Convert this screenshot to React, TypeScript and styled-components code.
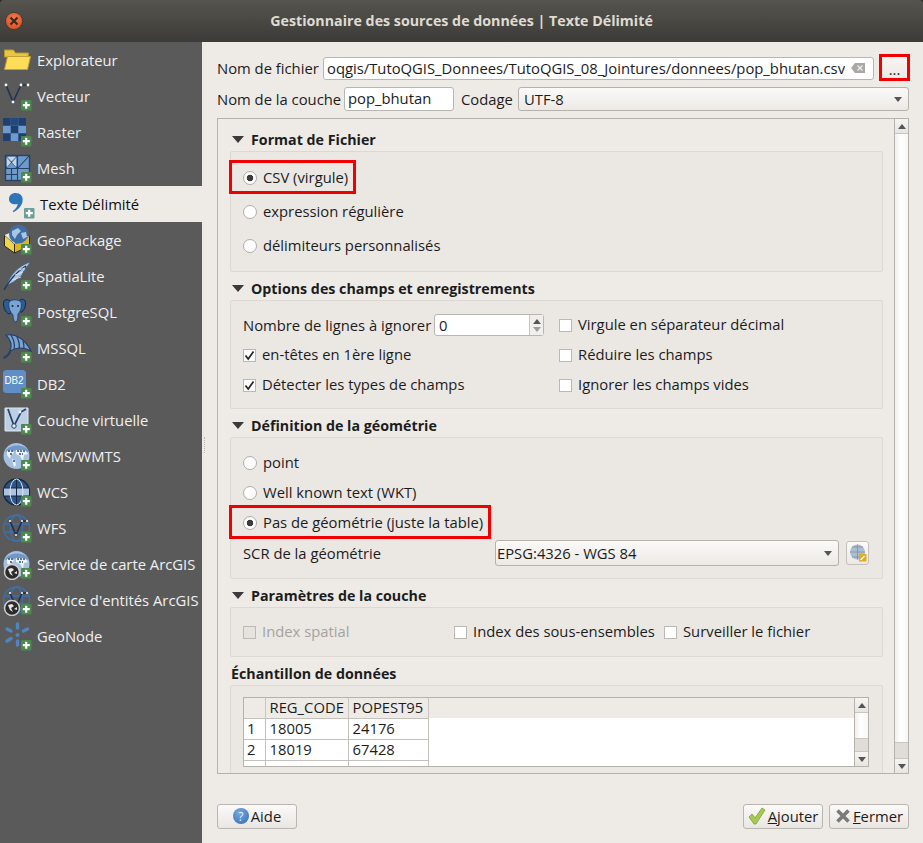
import styled, { createGlobalStyle } from 'styled-components';
import type { ReactNode } from 'react';

const GlobalStyle = createGlobalStyle`
    html, body {
        margin: 0;
        padding: 0;
        background-color: #2c2b28;
    }
    * {
        box-sizing: border-box;
    }
`;

const BLUE = '#5f8fc4';

const Plus = ({ light }: { light?: boolean }) => (
    <g>
        <rect x="19" y="20" width="10.5" height="10.5" rx="1" fill={light ? '#6b9f97' : '#4b8a4c'} />
        <path d="M24.2 21.8v7M20.8 25.2h7" stroke="#fff" strokeWidth="2.2" />
    </g>
);

const GlobeLight = () => (
    <g>
        <circle cx="14.5" cy="16" r="13" fill="#a5c0e0" />
        <path d="M3 12c3-8 20-9 24 0-8-2-16-2-24 0z" fill="#6f98c9" />
        <path d="M5 11l5-1 2 3-3 2-1 4-3-4zM14 10l9 0 3 4-4 1-1 6-3-5-4-2zM10 19l3 1 1 5-2 2z" fill="#eef3f8" />
        <path d="M6 11h6M15 11h8M8 14h3M17 14h4M11 21h2" stroke="#2d4f7c" strokeWidth="1.500" strokeDasharray="2 1" />
    </g>
);

const GlobeLines = () => (
    <g fill="none" stroke="#3f70ad" strokeWidth="1.3">
        <circle cx="14.5" cy="16" r="13" />
        <ellipse cx="14.5" cy="16" rx="6" ry="13" />
        <path d="M2 12h25M2 20h25" />
        <path d="M8 9l6 14 6-14h5" stroke="#1e2e46" strokeWidth="1.5" />
        <circle cx="8" cy="9" r="1" fill="#fff" stroke="none" />
        <circle cx="14" cy="23" r="1" fill="#fff" stroke="none" />
        <circle cx="20" cy="9" r="1" fill="#fff" stroke="none" />
        <circle cx="25" cy="9" r="1" fill="#fff" stroke="none" />
    </g>
);

const SmallEarth = () => (
    <g>
        <circle cx="10" cy="24" r="7.500" fill="#2b2b2b" stroke="#cfcfcf" strokeWidth="1.500" />
        <path d="M6 21l4-1 2 2-3 2 2 4-3-2zM12 25l3-2 0 3z" fill="#e8e8e8" />
    </g>
);

const icons: Record<string, ReactNode> = {
    folder: (
        <g>
            <path d="M2.5 6h9l2 3h13l-.5 4H2.5z" fill="#e9c543" stroke="#b8992f" />
            <path d="M5.5 12.5h23l-3 13H2.500z" fill="#fbdd58" stroke="#c1a136" />
        </g>
    ),
    vector: (
        <g>
            <path d="M4 5l7 17 8-17h7" fill="none" stroke="#22344f" strokeWidth="1.6" />
            {[[4, 5], [11, 22], [19, 5], [26, 5]].map(([x, y]) => (
                <circle key={x} cx={x} cy={y} r="1.4" fill="#f4f4f4" />
            ))}
        </g>
    ),
    raster: (
        <g>
            <rect x="1" y="2" width="23" height="23" fill="#6e9bcc" />
            <path d="M1 2h7.700v7.700H1zM16.300 2H24v7.700h-7.700zM8.700 9.700h7.600v7.600H8.700zM1 17.300h7.700V25H1zM16.300 17.300H24V25h-7.700z" fill="#1f3f6e" />
            <path d="M8.700 2h7.600v7.700H8.700z" fill="#244a7c" />
        </g>
    ),
    mesh: (
        <g>
            <rect x="3.500" y="3.500" width="24" height="25" fill="#6e9ac9" stroke="#24426b" strokeWidth="1.400" />
            <path d="M3.500 16.500h24M15.500 3.500v25M3.500 3.500l12 13M15.500 3.500l-12 13M15.500 16.500l12-13M3.500 22.500h12M9.500 16.500v12" fill="none" stroke="#24426b" strokeWidth="1.100" />
            <path d="M5 5h9L9.500 9.500zM5 15V6l4 4.500zM14 15V6l-4 4.500z" fill="#c9d4df" />
        </g>
    ),
    delimited: (
        <path d="M10.500 5c4.800 0 8 3.300 7 8.500-.8 4.500-4.600 8.500-9 10.800l-.8-1.100c3-2.200 4.800-4.600 5-7.500-2.800 1.500-8.700.3-8.700-4.500C4 7.200 7 5 10.500 5z" fill="#2c75b8" />
    ),
    geopackage: (
        <g>
            <path d="M2.500 11l10 9v9l-10-7z" fill="#f0d44a" stroke="#2e2a14" />
            <path d="M12.500 20l15-8v10l-15 7z" fill="#d8b62a" stroke="#2e2a14" />
            <path d="M2.500 11l5-2 13 3 7 0-15 8z" fill="#ece8da" />
            <circle cx="16.500" cy="10" r="9.500" fill="#3f6ea6" />
            <path d="M10 7l6-3 3 3-4 4-2 4-3-4zM19 9l5-1 1 5-4 2z" fill="#a9c5e3" />
        </g>
    ),
    spatialite: (
        <g>
            <path d="M5 25C8 15 16 6 28 2c-1 3-3 5-5 6 1 1 0 3-2 4 0 3-3 5-5 6-2 3-6 5-11 7z" fill="#a9c4e2" stroke="#3a5f8d" strokeWidth=".8" />
            <path d="M2 30C7 21 14 12 24 6" fill="none" stroke="#1d3557" strokeWidth="1.300" />
            <path d="M10 20l9-3M13 15l8-3M17 10l6-2" stroke="#eaf1f8" strokeWidth=".8" />
        </g>
    ),
    postgres: (
        <g>
            <path d="M8 5C4 2 1 4 1.500 9c.4 4 3 9 6.500 9 1-2 1-4 0-6z" fill="#2d5d96" stroke="#16263f" />
            <path d="M17 5c3-3 7-2 6.500 3-.3 4-2.500 9-5.500 8-1-2-1-4 0-6z" fill="#2d5d96" stroke="#16263f" />
            <path d="M7 6c3-3 9-3 12 0 1 4 0 9-3 12 0 3 0 7-2 8-2 0-3-3-3-7-3-3-5-8-4-13z" fill="#7aa5d2" stroke="#25456f" />
            <circle cx="10.500" cy="10" r="1" fill="#16263f" />
            <circle cx="16" cy="10" r="1" fill="#16263f" />
        </g>
    ),
    mssql: (
        <g>
            <path d="M4 3c9-2 19 4 25 16-7-4-14-4-21 0C10 14 9 8 4 3z" fill="#7aa2cf" stroke="#23406b" strokeWidth="1.200" />
            <path d="M9 3c3 5 4 10 3 14M15 5c2 4 3 8 2 12M21 9c1 3 1 5 1 8" fill="none" stroke="#23406b" strokeWidth="1.300" />
            <path d="M1.500 26C6 24 8 21 8.500 18" fill="none" stroke="#23406b" strokeWidth="2" />
        </g>
    ),
    db2: (
        <g>
            <rect x="1" y="2" width="23" height="23" rx="3.500" fill={BLUE} />
            <text x="2.500" y="15.500" fontFamily="'Liberation Sans', sans-serif" fontSize="11" fill="#fff" textLength="19" lengthAdjust="spacingAndGlyphs">DB2</text>
        </g>
    ),
    virtual: (
        <g>
            <path d="M3 4h23v20l-4 3H3z" fill="#bccfe4" stroke="#dfe7f0" />
            <path d="M6 5l6 17 7-14 5-3" fill="none" stroke="#24426b" strokeWidth="1.700" />
            <circle cx="12" cy="22" r="2.200" fill="#e6edf5" stroke="#24426b" />
            <circle cx="18" cy="8" r="1.400" fill="#fff" />
        </g>
    ),
    wms: <GlobeLight />,
    wcs: (
        <g>
            <circle cx="14.5" cy="16" r="13" fill="#2c5588" stroke="#16263f" strokeWidth="1.400" />
            <path d="M2 12h25v8H2z" fill="#a9c3e0" />
            <path d="M2 12h25M2 20h25M14.500 3v26" stroke="#16263f" />
            <ellipse cx="14.5" cy="16" rx="6.500" ry="13" fill="none" stroke="#dce6f1" />
        </g>
    ),
    wfs: <GlobeLines />,
    arcMap: (
        <g>
            <GlobeLight />
            <SmallEarth />
        </g>
    ),
    arcFeature: (
        <g>
            <GlobeLines />
            <SmallEarth />
        </g>
    ),
    geonode: (
        <g stroke="#4f85c0" strokeWidth="3.400" strokeLinecap="round" fill="none">
            <path d="M15.500 4v4M5 9l4 2M25.500 9l-4 2M5 21l4-2.500M15.500 21v4" />
            <circle cx="15.500" cy="15" r="1" fill="#4f85c0" strokeWidth="2" />
        </g>
    ),
};

const sources = [
    { key: 'folder', label: 'Explorateur', plus: false },
    { key: 'vector', label: 'Vecteur', plus: true },
    { key: 'raster', label: 'Raster', plus: true },
    { key: 'mesh', label: 'Mesh', plus: true },
    { key: 'delimited', label: 'Texte Délimité', plus: true },
    { key: 'geopackage', label: 'GeoPackage', plus: true },
    { key: 'spatialite', label: 'SpatiaLite', plus: true },
    { key: 'postgres', label: 'PostgreSQL', plus: true },
    { key: 'mssql', label: 'MSSQL', plus: true },
    { key: 'db2', label: 'DB2', plus: true },
    { key: 'virtual', label: 'Couche virtuelle', plus: true },
    { key: 'wms', label: 'WMS/WMTS', plus: true },
    { key: 'wcs', label: 'WCS', plus: true },
    { key: 'wfs', label: 'WFS', plus: true },
    { key: 'arcMap', label: 'Service de carte ArcGIS', plus: true },
    { key: 'arcFeature', label: "Service d'entités ArcGIS", plus: true },
    { key: 'geonode', label: 'GeoNode', plus: true },
];

const ScrollBar = ({ thumb }: { thumb: number }) => (
    <ScrollTrack>
        <ScrollButton>
            <ArrowUp />
        </ScrollButton>
        <ScrollRail />
        <ScrollThumb $height={thumb} />
        <ScrollButton>
            <ArrowDown />
        </ScrollButton>
    </ScrollTrack>
);

const Radio = ({ label, checked, marked }: { label: string; checked?: boolean; marked?: boolean }) => (
    <RadioRow>
        <RadioLabel $marked={marked}>
            <RadioDot $checked={checked} />
            <LiftedText>{label}</LiftedText>
        </RadioLabel>
    </RadioRow>
);

const Check = ({ label, checked, disabled }: { label: string; checked?: boolean; disabled?: boolean }) => (
    <CheckRow $disabled={disabled}>
        <CheckBox $disabled={disabled}>
            {checked && (
                <svg width="11" height="11" viewBox="0 0 11 11">
                    <path d="M1.500 5.500l2.700 3.500L9.500 1.500" fill="none" stroke="#2a2a2a" strokeWidth="1.800" />
                </svg>
            )}
        </CheckBox>
        <LiftedText>{label}</LiftedText>
    </CheckRow>
);

const App = () => {
    return (
        <Window>
            <GlobalStyle />
            <TitleBar>
                <CloseButton>
                    <svg width="10" height="10" viewBox="0 0 10 10">
                        <path d="M1.500 1.500l7 7M8.500 1.500l-7 7" stroke="#3a2a20" strokeWidth="2.200" />
                    </svg>
                </CloseButton>
                Gestionnaire des sources de données | Texte Délimité
            </TitleBar>
            <Body>
                <Sidebar>
                    {sources.map((s) => (
                        <SideItem key={s.key} $active={s.key === 'delimited'}>
                            <svg width="32" height="32" viewBox="0 0 32 32">
                                {icons[s.key]}
                                {s.plus && <Plus light={s.key === 'delimited'} />}
                            </svg>
                            {s.label}
                        </SideItem>
                    ))}
                </Sidebar>
                <Main>
                    <FormRow>
                        <FieldLabel>Nom de fichier</FieldLabel>
                        <PathInput>
                            <PathText>oqgis/TutoQGIS_Donnees/TutoQGIS_08_Jointures/donnees/pop_bhutan.csv</PathText>
                            <svg width="14" height="10" viewBox="0 0 14 10">
                                <path d="M4 0h10v10H4L0 5z" fill="#aaa8a4" />
                                <path d="M6.500 2.500l5 5M11.500 2.500l-5 5" stroke="#eeeeee" strokeWidth="1.300" />
                            </svg>
                        </PathInput>
                        <BrowseButton>...</BrowseButton>
                    </FormRow>
                    <LayerRow>
                        <LayerLabel>Nom de la couche</LayerLabel>
                        <LayerInput>pop_bhutan</LayerInput>
                        <CodecLabel>Codage</CodecLabel>
                        <Combo $width={391}>
                            UTF-8
                            <ComboArrow />
                        </Combo>
                    </LayerRow>
                    <ScrollFrame>
                        <ScrollContent>
                            <SectionTitle>
                                <Caret />
                                Format de Fichier
                            </SectionTitle>
                            <Group $height={121} $top={9}>
                                <Radio label="CSV (virgule)" checked marked />
                                <Radio label="expression régulière" />
                                <Radio label="délimiteurs personnalisés" />
                            </Group>

                            <SectionTitle>
                                <Caret />
                                Options des champs et enregistrements
                            </SectionTitle>
                            <Group $height={109} $top={9}>
                                <OptionsGrid>
                                    <SpinRow>
                                        Nombre de lignes à ignorer
                                        <SpinBox>
                                            0
                                            <SpinArrows>
                                                <ArrowUp />
                                                <SpinDown />
                                            </SpinArrows>
                                        </SpinBox>
                                    </SpinRow>
                                    <Check label="Virgule en séparateur décimal" />
                                    <Check label="en-têtes en 1ère ligne" checked />
                                    <Check label="Réduire les champs" />
                                    <Check label="Détecter les types de champs" checked />
                                    <Check label="Ignorer les champs vides" />
                                </OptionsGrid>
                            </Group>

                            <SectionTitle>
                                <Caret />
                                Définition de la géométrie
                            </SectionTitle>
                            <Group $height={142} $top={10}>
                                <GeomRadios>
                                    <Radio label="point" />
                                    <Radio label="Well known text (WKT)" />
                                    <Radio label="Pas de géométrie (juste la table)" checked marked />
                                </GeomRadios>
                                <CrsRow>
                                    <CrsLabel>SCR de la géométrie</CrsLabel>
                                    <Combo $width={344}>
                                        EPSG:4326 - WGS 84
                                        <ComboArrow />
                                    </Combo>
                                    <CrsButton>
                                        <svg width="20" height="20" viewBox="0 0 20 20">
                                            <circle cx="9.500" cy="9" r="7.500" fill="#a8bfd8" />
                                            <path d="M2 9h15M9.500 1.500v15M4 4h11M4 14h11" stroke="#8d8d8d" strokeWidth=".8" />
                                            <rect x="11" y="11" width="7.500" height="7.500" fill="#e0ac1a" />
                                            <path d="M12.500 17l4-4" stroke="#fff" strokeWidth="1.200" />
                                        </svg>
                                    </CrsButton>
                                </CrsRow>
                            </Group>

                            <SectionTitle>
                                <Caret />
                                Paramètres de la couche
                            </SectionTitle>
                            <Group $height={50} $top={14}>
                                <LayerOptions>
                                    <Check label="Index spatial" disabled />
                                    <Check label="Index des sous-ensembles" />
                                    <Check label="Surveiller le fichier" />
                                </LayerOptions>
                            </Group>

                            <SectionTitle>Échantillon de données</SectionTitle>
                            <Group $height={120} $top={11}>
                                <SampleView>
                                    <SampleClip>
                                        <SampleTable>
                                            <thead>
                                                <tr>
                                                    <HeadCell $width={21} />
                                                    <HeadCell $width={83}>REG_CODE</HeadCell>
                                                    <HeadCell $width={80}>POPEST95</HeadCell>
                                                    <HeadFiller />
                                                </tr>
                                            </thead>
                                            <tbody>
                                                <tr>
                                                    <RowCell>1</RowCell>
                                                    <DataCell>18005</DataCell>
                                                    <DataCell>24176</DataCell>
                                                    <FillerCell />
                                                </tr>
                                                <tr>
                                                    <RowCell>2</RowCell>
                                                    <DataCell>18019</DataCell>
                                                    <DataCell>67428</DataCell>
                                                    <FillerCell />
                                                </tr>
                                                <tr>
                                                    <RowCell />
                                                    <DataCell />
                                                    <DataCell />
                                                    <FillerCell />
                                                </tr>
                                            </tbody>
                                        </SampleTable>
                                    </SampleClip>
                                    <ScrollBar thumb={14} />
                                </SampleView>
                            </Group>
                        </ScrollContent>
                        <ScrollBar thumb={17} />
                    </ScrollFrame>
                    <Footer>
                        <PushButton>
                            <HelpBadge>?</HelpBadge>
                            Aide
                        </PushButton>
                        <FooterRight>
                            <PushButton>
                                <svg width="18" height="18" viewBox="0 0 18 18">
                                    <path d="M1 10l3-3 3 4L14 1l3 2-9 14H6z" fill="#a5cb4f" stroke="#7d9e3a" strokeWidth=".8" />
                                </svg>
                                <span>
                                    <u>A</u>jouter
                                </span>
                            </PushButton>
                            <PushButton>
                                <svg width="16" height="16" viewBox="0 0 16 16">
                                    <path d="M2.500 2.500l11 11M13.500 2.500l-11 11" stroke="#7a7a78" strokeWidth="3.600" />
                                </svg>
                                <span>
                                    <u>F</u>ermer
                                </span>
                            </PushButton>
                        </FooterRight>
                    </Footer>
                </Main>
            </Body>
        </Window>
    );
};

export default App;

const Window = styled.div`
    width: 923px;
    height: 843px;
    display: flex;
    flex-direction: column;
    overflow: hidden;
    font-family: 'Open Sans', 'Noto Sans', sans-serif;
    font-size: 14.8px;
    color: #1c1c1c;
`;

const TitleBar = styled.div`
    position: relative;
    height: 42px;
    flex: none;
    display: flex;
    align-items: center;
    justify-content: center;
    padding: 0 0 2px 0;
    background: linear-gradient(#56544e, #3c3b37);
    border-radius: 4px 4px 0 0;
    color: #dfdbd2;
    font-size: 14.25px;
    font-weight: 700;
`;

const CloseButton = styled.div`
    position: absolute;
    left: 6px;
    top: 13px;
    width: 16px;
    height: 16px;
    border-radius: 50%;
    display: flex;
    align-items: center;
    justify-content: center;
    background: radial-gradient(circle at 50% 35%, #f47a4a, #d9481c);
    box-shadow: 0 0 0 1px #4a3a30;
`;

const Body = styled.div`
    flex: 1;
    display: flex;
    min-height: 0;
    background-color: #eeebe7;
`;

const Sidebar = styled.div`
    width: 202px;
    flex: none;
    background-color: #5a5a5a;
`;

const SideItem = styled.div<{ $active?: boolean }>`
    height: 36px;
    display: flex;
    align-items: center;
    gap: 3px;
    padding-left: ${(p) => (p.$active ? '5px' : '2px')};
    white-space: nowrap;
    background-color: ${(p) => (p.$active ? '#eeebe7' : 'transparent')};
    color: ${(p) => (p.$active ? '#101010' : '#f0f0f0')};
`;

const Main = styled.div`
    position: relative;
    flex: 1;
    min-width: 0;
    display: flex;
    flex-direction: column;
    padding: 15px 14px 0 15px;

    &::before {
        content: '';
        position: absolute;
        left: 2px;
        top: 395px;
        height: 16px;
        border-left: 1px dotted #b8b5b0;
    }
`;

const FormRow = styled.div`
    display: flex;
    align-items: center;
    height: 23px;
`;

const LayerRow = styled(FormRow)`
    height: 24px;
    margin-top: 7px;
`;

const FieldLabel = styled.div`
    white-space: nowrap;
    padding-bottom: 1px;
`;

const LayerLabel = styled(FieldLabel)`
    width: 127px;
    flex: none;
`;

const inputBox = `
    height: 100%;
    display: flex;
    align-items: center;
    background-color: #fff;
    border: 1px solid #b9b6b1;
    border-radius: 3px;
    padding: 0 3px 2px;
    white-space: nowrap;
    overflow: hidden;
`;

const PathInput = styled.div`
    ${inputBox}
    width: 551px;
    margin-left: auto;
    justify-content: space-between;
    padding-right: 8px;
`;

const PathText = styled.span`
    overflow: hidden;
`;

const BrowseButton = styled.div`
    position: relative;
    width: 29px;
    height: 100%;
    margin-left: 6px;
    display: flex;
    align-items: center;
    justify-content: center;
    background: linear-gradient(#f7f5f3, #ebe8e4);

    &::after {
        content: '';
        position: absolute;
        inset: -3px -1px -1px -1px;
        border: 3px solid #f00000;
    }
`;

const LayerInput = styled.div`
    ${inputBox}
    width: 110px;
    flex: none;
`;

const CodecLabel = styled.div`
    margin: 0 auto 0 7px;
    padding-bottom: 1px;
`;

const Combo = styled.div<{ $width: number }>`
    position: relative;
    flex: none;
    width: ${(p) => p.$width}px;
    height: 100%;
    display: flex;
    align-items: center;
    padding: 0 0 1px 5px;
    border: 1px solid #b5b2ad;
    border-radius: 3px;
    background: linear-gradient(#fbfaf9, #ece9e5);
`;

const ComboArrow = styled.span`
    position: absolute;
    right: 6px;
    top: 50%;
    margin-top: -2px;
    border-left: 4px solid transparent;
    border-right: 4px solid transparent;
    border-top: 5px solid #555;
`;

const ScrollFrame = styled.div`
    height: 656px;
    margin-top: 7px;
    display: flex;
    border: 1px solid #b5b2ad;
    overflow: hidden;
`;

const ScrollContent = styled.div`
    flex: 1;
    min-width: 0;
    padding: 10px 11px 0 12px;
    overflow: hidden;
`;

const ScrollTrack = styled.div`
    width: 14px;
    flex: none;
    display: flex;
    flex-direction: column;
    border-left: 1px solid #b5b2ad;
`;

const ScrollButton = styled.div`
    height: 14px;
    flex: none;
    display: flex;
    align-items: center;
    justify-content: center;
    background: linear-gradient(#f6f4f2, #e8e5e1);
`;

const ScrollRail = styled.div`
    flex: 1;
    border-top: 1px solid #c9c6c1;
    background: linear-gradient(90deg, #f2f0ee, #ffffff 45%, #f8f7f5);
`;

const ScrollThumb = styled.div<{ $height: number }>`
    height: ${(p) => p.$height}px;
    flex: none;
    background-color: #e0ddd9;
    border-top: 1px solid #c9c6c1;
    border-bottom: 1px solid #c9c6c1;
`;

const ArrowUp = styled.span`
    border-left: 4px solid transparent;
    border-right: 4px solid transparent;
    border-bottom: 5px solid #555;
`;

const ArrowDown = styled.span`
    border-left: 4px solid transparent;
    border-right: 4px solid transparent;
    border-top: 5px solid #555;
`;

const SpinDown = styled(ArrowDown)`
    border-top-color: #a09d99;
`;

const SectionTitle = styled.div`
    height: 22px;
    display: flex;
    align-items: center;
    gap: 7px;
    padding: 0 0 2px 1px;
    font-size: 14.25px;
    font-weight: 700;

    &:not(:first-child) {
        margin-top: 6px;
    }
`;

const Caret = styled.span`
    margin-left: 1px;
    border-left: 6px solid transparent;
    border-right: 6px solid transparent;
    border-top: 7px solid #3a3a3a;
`;

const Group = styled.div<{ $height: number; $top: number }>`
    height: ${(p) => p.$height}px;
    padding: ${(p) => p.$top}px 13px 0 12px;
    background-color: #ebe8e4;
    border: 1px solid #dcd9d4;
    border-radius: 2px;
`;

const LiftedText = styled.span`
    margin-top: -2px;
`;

const RadioRow = styled.div`
    height: 34px;
    display: flex;
    align-items: center;
`;

const GeomRadios = styled.div`
    display: flex;
    flex-direction: column;

    ${RadioRow} {
        height: 30px;
    }
`;

const RadioLabel = styled.div<{ $marked?: boolean }>`
    position: relative;
    display: flex;
    align-items: center;
    gap: 6px;
    white-space: nowrap;

    ${(p) =>
        p.$marked &&
        `&::after {
            content: '';
            position: absolute;
            left: -14px;
            right: -8px;
            top: -9px;
            bottom: -7px;
            border: 3px solid #f00000;
        }`}
`;

const RadioDot = styled.span<{ $checked?: boolean }>`
    width: 14px;
    height: 14px;
    flex: none;
    border-radius: 50%;
    border: 1px solid #b0ada8;
    background: ${(p) => (p.$checked ? 'radial-gradient(circle, #3c3c3c 0 3px, #fff 3.6px)' : '#fff')};
`;

const CheckRow = styled.div<{ $disabled?: boolean }>`
    display: flex;
    align-items: center;
    gap: 6px;
    white-space: nowrap;
    color: ${(p) => (p.$disabled ? '#a5a29e' : 'inherit')};
`;

const CheckBox = styled.span<{ $disabled?: boolean }>`
    width: 13px;
    height: 13px;
    flex: none;
    display: flex;
    align-items: center;
    justify-content: center;
    border: 1px solid #bcb9b4;
    background-color: ${(p) => (p.$disabled ? '#e6e3df' : '#fff')};
`;

const OptionsGrid = styled.div`
    display: grid;
    grid-template-columns: 316px 1fr;
    grid-auto-rows: 30px;
    align-items: center;
`;

const SpinRow = styled.div`
    display: flex;
    align-items: center;
    justify-content: space-between;
    width: 301px;
    white-space: nowrap;
`;

const SpinBox = styled.div`
    position: relative;
    width: 110px;
    height: 22px;
    display: flex;
    align-items: center;
    padding: 0 0 1px 4px;
    background-color: #fff;
    border: 1px solid #b9b6b1;
    border-radius: 3px;
`;

const SpinArrows = styled.div`
    position: absolute;
    right: 0;
    top: 0;
    bottom: 0;
    width: 14px;
    display: flex;
    flex-direction: column;
    align-items: center;
    justify-content: center;
    gap: 3px;
    border-left: 1px solid #c9c6c1;
    background-color: #f1efec;
`;

const CrsRow = styled.div`
    height: 26px;
    margin-top: 2px;
    display: flex;
    align-items: center;
    gap: 6px;

    ${Combo} {
        padding-left: 1px;
    }
`;

const CrsLabel = styled.div`
    width: 246px;
    flex: none;
    white-space: nowrap;
`;

const CrsButton = styled.div`
    width: 24px;
    height: 24px;
    margin-left: 1px;
    display: flex;
    align-items: center;
    justify-content: center;
    border: 1px solid #c4c1bc;
    border-radius: 3px;
    background: linear-gradient(#fbfaf9, #ece9e5);
`;

const LayerOptions = styled.div`
    display: grid;
    grid-template-columns: 211px 210px 1fr;
    height: 20px;
    align-items: center;
`;

const SampleView = styled.div`
    height: 70px;
    display: flex;
    border: 1px solid #b5b2ad;
    background-color: #fff;
`;

const SampleClip = styled.div`
    flex: 1;
    min-width: 0;
    overflow: hidden;
`;

const SampleTable = styled.table`
    width: 100%;
    table-layout: fixed;
    border-collapse: collapse;
    line-height: 18px;
`;

const HeadCell = styled.th<{ $width: number }>`
    width: ${(p) => p.$width}px;
    height: 20px;
    padding: 0 0 1px 4px;
    font-weight: 400;
    text-align: left;
    white-space: nowrap;
    background-color: #eeebe7;
    border-right: 1px solid #c9c6c1;
`;

const HeadFiller = styled.th`
    background-color: #eeebe7;
`;

const RowCell = styled.td`
    height: 21px;
    padding: 0 0 1px 3px;
    border: 1px solid #c4c1bc;
    border-left: none;
    background-color: #fff;
`;

const DataCell = styled.td`
    height: 21px;
    padding: 0 0 1px 4px;
    border: 1px solid #c4c1bc;
`;

const FillerCell = styled.td`
    background-color: #fff;
`;

const Footer = styled.div`
    margin-top: 30px;
    display: flex;
    justify-content: space-between;
`;

const FooterRight = styled.div`
    display: flex;
    gap: 6px;
`;

const PushButton = styled.div`
    width: 80px;
    height: 25px;
    display: flex;
    align-items: center;
    justify-content: center;
    gap: 2px;
    padding-bottom: 1px;
    border: 1px solid #b9b6b1;
    border-radius: 3px;
    background: linear-gradient(#fbfaf9, #e9e6e2);
`;

const HelpBadge = styled.span`
    width: 16px;
    height: 16px;
    border-radius: 50%;
    display: flex;
    align-items: center;
    justify-content: center;
    font-size: 12px;
    color: #e6eef8;
    background: radial-gradient(circle at 40% 30%, #79a8de, #2f6cb3);
`;
